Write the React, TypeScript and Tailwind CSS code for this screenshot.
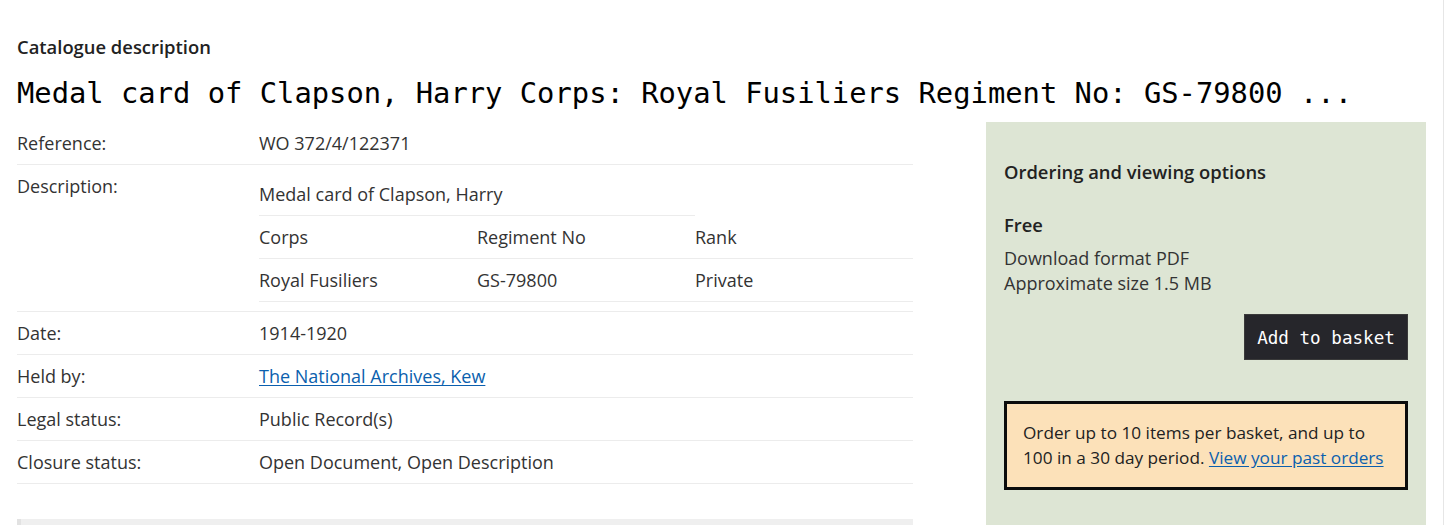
import React from 'react'

const sans = { fontFamily: '"Open Sans", "Noto Sans", Arial, sans-serif' }
const mono = { fontFamily: '"DejaVu Sans Mono", "Liberation Mono", monospace' }

function Row({ label, children }: { label: string; children: React.ReactNode }) {
  return (
    <div className="flex border-b border-[#ececec]">
      <div className="w-[242px] shrink-0 py-2 text-[#333]">{label}</div>
      <div className="flex-1 py-2 text-[#333]">{children}</div>
    </div>
  )
}

export default function App() {
  return (
    <div className="w-[1444px] min-h-[525px] border-r border-[#e6e6e6] bg-white overflow-hidden" style={sans}>
      <div className="px-[17px] pt-[35px]">
        {/* Heading */}
        <p className="text-[18.4px] leading-[24px] font-semibold text-[#222]">Catalogue description</p>
        <h1 className="mt-[16px] text-[28.8px] leading-[36px] text-black whitespace-nowrap" style={mono}>
          Medal card of Clapson, Harry Corps: Royal Fusiliers Regiment No: GS-79800 ...
        </h1>

        <div className="mt-[11px] flex">
          {/* Details table */}
          <div className="w-[896px] shrink-0 text-[18px] leading-[26px]">
            <Row label="Reference:">WO 372/4/122371</Row>
            <div className="flex border-b border-[#ececec]">
              <div className="w-[242px] shrink-0 py-2 text-[#333]">Description:</div>
              <div className="flex-1 pt-2 pb-[9px] text-[#333]">
                <div className="w-2/3 border-b border-[#ececec] py-2">Medal card of Clapson, Harry</div>
                <div className="grid grid-cols-3 border-b border-[#ececec]">
                  <div className="py-2">Corps</div>
                  <div className="py-2">Regiment No</div>
                  <div className="py-2">Rank</div>
                </div>
                <div className="grid grid-cols-3 border-b border-[#ececec]">
                  <div className="py-2">Royal Fusiliers</div>
                  <div className="py-2">GS-79800</div>
                  <div className="py-2">Private</div>
                </div>
              </div>
            </div>
            <Row label="Date:">1914-1920</Row>
            <Row label="Held by:">
              <a href="#" className="text-[#0b5fae] underline underline-offset-2">
                The National Archives, Kew
              </a>
            </Row>
            <Row label="Legal status:">Public Record(s)</Row>
            <Row label="Closure status:">Open Document, Open Description</Row>
            <div className="mt-[35px] h-[12px] bg-[#efefef] border-l-[4px] border-[#e2e2e2]" />
          </div>

          {/* Ordering panel */}
          <div className="ml-[73px] w-[440px] shrink-0 bg-[#dde5d4] px-[18px] pt-[37px] pb-[40px] text-[18px]">
            <h2 className="text-[18.4px] leading-[26px] font-semibold text-[#222]">Ordering and viewing options</h2>
            <p className="mt-[27px] text-[18.4px] leading-[26px] font-semibold text-[#222]">Free</p>
            <div className="mt-[8px] leading-[25px] text-[#333]">
              <p>Download format PDF</p>
              <p>Approximate size 1.5 MB</p>
            </div>
            <div className="mt-[18px] flex justify-end">
              <button
                className="h-[46px] w-[164px] pt-[3px] bg-[#26262b] text-white text-[17.6px] border border-[#3a3a3a]"
                style={mono}
              >
                Add to basket
              </button>
            </div>
            <div className="mt-[41px] border-[3px] border-[#0b0c0c] bg-[#fce1b9] px-[16px] pt-[16px] pb-[17px] text-[17.2px] leading-[25px] text-[#222]">
              Order up to 10 items per basket, and up to 100 in a 30 day period.{' '}
              <a href="#" className="text-[#0b5fae] underline underline-offset-2">
                View your past orders
              </a>
            </div>
          </div>
        </div>
      </div>
    </div>
  )
}
